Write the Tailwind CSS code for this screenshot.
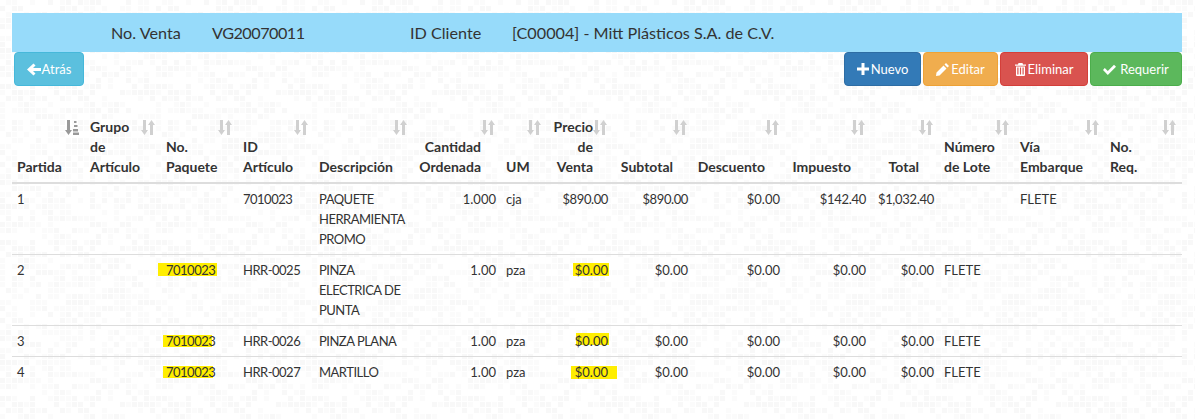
<!DOCTYPE html>
<html lang="en">
<head>
  <meta charset="UTF-8">
  <title>Partidas de Venta</title>
  <script src="https://cdn.jsdelivr.net/npm/@tailwindcss/browser@4"></script>
</head>
<body class="relative h-[419px] overflow-hidden bg-white text-[13px] leading-5 text-[#333] font-['Lato',sans-serif]">
  <!-- textured page background + shared sort icons -->
  <svg class="absolute inset-0 -z-10" width="1195" height="419">
    <defs>
      <pattern id="tile" width="156" height="156" patternUnits="userSpaceOnUse"><g id="tileCells"></g></pattern>
      <symbol id="sort" viewBox="0 0 14 15"><path d="M2 0h3v10h2L3.500 15 0 10h2zM9 15h3V5h2L10.500 0 7 5h2z"/></symbol>
      <symbol id="sortActive" viewBox="0 0 14 15"><path d="M2 0h3v10h2L3.500 15 0 10h2zM9 1h2.500v2H9zM9 5h3.500v2H9zM8 9h5v2.500H8zM8 12.500h6V15H8z"/></symbol>
    </defs>
    <rect width="1195" height="419" fill="url(#tile)"/>
  </svg>

  <div class="pl-3 pr-[13px] pt-[13px]">
    <!-- venta header -->
    <div class="flex h-[39px] items-center bg-[#97dbfa] pl-[99px] text-[16.200px]">
      <span class="w-[101px]">No. Venta</span>
      <span class="w-[198px] tracking-[-0.5px]">VG20070011</span>
      <span class="w-[102px]">ID Cliente</span>
      <span>[C00004] - Mitt Plásticos S.A. de C.V.</span>
    </div>

    <!-- toolbar -->
    <div class="flex h-[34px] justify-between pl-0.5">
      <button class="flex w-[70px] items-center justify-center gap-px rounded border border-[#46b8da] bg-[#5bc0de] text-white">
        <svg width="14" height="13" viewBox="0 0 14 13" fill="#fff"><path d="M6.500 .5 8.500 2.500 6 5h8v3H6l2.500 2.500-2 2L0 6.500z"/></svg>Atrás
      </button>
      <div class="flex gap-0.5">
        <button class="flex w-[77px] items-center justify-center gap-0.5 rounded border border-[#2e6da4] bg-[#337ab7] text-white">
          <svg width="12" height="12" viewBox="0 0 12 12" fill="#fff"><path d="M4.500 0h3v4.500H12v3H7.500V12h-3V7.500H0v-3h4.500z"/></svg>Nuevo
        </button>
        <button class="flex w-[75px] items-center justify-center gap-0.5 rounded border border-[#eea236] bg-[#f0ad4e] text-white">
          <svg width="13" height="13" viewBox="0 0 13 13" fill="#fff"><path d="M10 0 13 3 11.500 4.500 8.500 1.500zM7.500 2.500 10.500 5.500 3.500 12.500 0 13 .5 9.500z"/></svg>Editar
        </button>
        <button class="flex w-[88px] items-center justify-center gap-0.5 rounded border border-[#d43f3a] bg-[#d9534f] text-white">
          <svg width="11" height="13" viewBox="0 0 11 13" fill="#fff"><path d="M3.500 0h4L8 1.500h3v1.300H0V1.500h3zM1 3.500h9V12a1 1 0 0 1-1 1H2a1 1 0 0 1-1-1zm1.300 1v7h1.200v-7zm2.600 0v7h1.200v-7zm2.600 0v7h1.200v-7z"/></svg>Eliminar
        </button>
        <button class="flex w-[92px] items-center justify-center gap-1 rounded border border-[#4cae4c] bg-[#5cb85c] text-white">
          <svg width="13" height="11" viewBox="0 0 13 11" fill="#fff"><path d="M1.800 4 4.800 7 11 .8 13 2.800 4.800 11 0 6z"/></svg>Requerir
        </button>
      </div>
    </div>

    <!-- partidas -->
    <table class="mt-[26px] w-[1170px] table-fixed border-collapse">
      <colgroup>
        <col class="w-[73px]"><col class="w-[76px]"><col class="w-[77px]"><col class="w-[76px]"><col class="w-[99px]">
        <col class="w-[88px]"><col class="w-[46px]"><col class="w-[66px]"><col class="w-[80px]"><col class="w-[92px]">
        <col class="w-[86px]"><col class="w-[68px]"><col class="w-[76px]"><col class="w-[90px]"><col class="w-[77px]">
      </colgroup>
      <thead class="text-[14px]">
        <tr class="border-b-2 border-[#ddd] align-bottom font-bold">
          <th class="relative py-[5px] pl-[5px] pr-0 text-left">Partida
            <svg class="absolute right-1.5 top-2 fill-[#999]" width="14" height="15"><use href="#sortActive"/></svg>
          </th>
          <th class="relative py-[5px] pl-[5px] pr-5 text-left">Grupo de Artículo
            <svg class="absolute right-1.5 top-2 fill-[#d0d0d0]" width="14" height="15"><use href="#sort"/></svg>
          </th>
          <th class="relative py-[5px] pl-[5px] pr-5 text-left">No. Paquete
            <svg class="absolute right-1.5 top-2 fill-[#d0d0d0]" width="14" height="15"><use href="#sort"/></svg>
          </th>
          <th class="relative py-[5px] pl-[5px] pr-5 text-left">ID Artículo
            <svg class="absolute right-1.5 top-2 fill-[#d0d0d0]" width="14" height="15"><use href="#sort"/></svg>
          </th>
          <th class="relative py-[5px] pl-[5px] pr-0 text-left">Descripción
            <svg class="absolute right-1.5 top-2 fill-[#d0d0d0]" width="14" height="15"><use href="#sort"/></svg>
          </th>
          <th class="relative py-[5px] pl-0 pr-5 text-right">Cantidad Ordenada
            <svg class="absolute right-1.5 top-2 fill-[#d0d0d0]" width="14" height="15"><use href="#sort"/></svg>
          </th>
          <th class="relative py-[5px] pl-[5px] pr-0 text-left">UM
            <svg class="absolute right-1.5 top-2 fill-[#d0d0d0]" width="14" height="15"><use href="#sort"/></svg>
          </th>
          <th class="relative py-[5px] pl-0 pr-5 text-right">Precio de Venta
            <svg class="absolute right-1.5 top-2 fill-[#d0d0d0]" width="14" height="15"><use href="#sort"/></svg>
          </th>
          <th class="relative py-[5px] pl-0 pr-5 text-right">Subtotal
            <svg class="absolute right-1.5 top-2 fill-[#d0d0d0]" width="14" height="15"><use href="#sort"/></svg>
          </th>
          <th class="relative py-[5px] pl-0 pr-5 text-right">Descuento
            <svg class="absolute right-1.5 top-2 fill-[#d0d0d0]" width="14" height="15"><use href="#sort"/></svg>
          </th>
          <th class="relative py-[5px] pl-0 pr-5 text-right">Impuesto
            <svg class="absolute right-1.5 top-2 fill-[#d0d0d0]" width="14" height="15"><use href="#sort"/></svg>
          </th>
          <th class="relative py-[5px] pl-0 pr-5 text-right">Total
            <svg class="absolute right-1.5 top-2 fill-[#d0d0d0]" width="14" height="15"><use href="#sort"/></svg>
          </th>
          <th class="relative py-[5px] pl-[5px] pr-3 text-left">Número de Lote
            <svg class="absolute right-1.5 top-2 fill-[#d0d0d0]" width="14" height="15"><use href="#sort"/></svg>
          </th>
          <th class="relative py-[5px] pl-[5px] pr-3 text-left">Vía Embarque
            <svg class="absolute right-1.5 top-2 fill-[#d0d0d0]" width="14" height="15"><use href="#sort"/></svg>
          </th>
          <th class="relative py-[5px] pl-[5px] pr-10 text-left">No. Req.
            <svg class="absolute right-1.5 top-2 fill-[#d0d0d0]" width="14" height="15"><use href="#sort"/></svg>
          </th>
        </tr>
      </thead>
      <tbody class="align-top [&_td]:p-[5px]">
        <tr class="border-b border-[#ddd]">
          <td>1</td><td></td><td></td><td class="tracking-[-0.5px]">7010023</td><td class="tracking-[-0.5px]">PAQUETE HERRAMIENTA PROMO</td>
          <td class="text-right">1.000</td><td>cja</td><td class="text-right tracking-[-0.4px]">$890.00</td><td class="text-right tracking-[-0.4px]">$890.00</td><td class="text-right">$0.00</td>
          <td class="text-right tracking-[-0.3px]">$142.40</td><td class="text-right tracking-[-0.3px]">$1,032.40</td><td></td><td>FLETE</td><td></td>
        </tr>
        <tr class="border-b border-[#ddd]">
          <td>2</td><td></td>
          <td class="relative tracking-[-0.5px]"><span class="absolute -z-[1] left-[-3px] top-[8px] h-[13px] w-[59px] bg-[#ffee00]"></span>7010023</td>
          <td class="tracking-[-0.5px]">HRR-0025</td><td class="tracking-[-0.5px]">PINZA ELECTRICA DE PUNTA</td>
          <td class="text-right">1.00</td><td>pza</td>
          <td class="relative text-right"><span class="absolute -z-[1] right-[4px] top-[8px] h-[13px] w-[36px] bg-[#ffee00]"></span>$0.00</td>
          <td class="text-right">$0.00</td><td class="text-right">$0.00</td>
          <td class="text-right">$0.00</td><td class="text-right">$0.00</td><td>FLETE</td><td></td><td></td>
        </tr>
        <tr class="border-b border-[#ddd]">
          <td>3</td><td></td>
          <td class="relative tracking-[-0.5px]"><span class="absolute -z-[1] left-[2px] top-[9px] h-[12px] w-[49px] bg-[#ffee00]"></span>7010023</td>
          <td class="tracking-[-0.5px]">HRR-0026</td><td class="tracking-[-0.5px]">PINZA PLANA</td>
          <td class="text-right">1.00</td><td>pza</td>
          <td class="relative text-right"><span class="absolute -z-[1] right-[4px] top-[7px] h-[12px] w-[33px] bg-[#ffee00]"></span>$0.00</td>
          <td class="text-right">$0.00</td><td class="text-right">$0.00</td>
          <td class="text-right">$0.00</td><td class="text-right">$0.00</td><td>FLETE</td><td></td><td></td>
        </tr>
        <tr>
          <td>4</td><td></td>
          <td class="relative tracking-[-0.5px]"><span class="absolute -z-[1] left-[2px] top-[9px] h-[12px] w-[50px] bg-[#ffee00]"></span>7010023</td>
          <td class="tracking-[-0.5px]">HRR-0027</td><td class="tracking-[-0.5px]">MARTILLO</td>
          <td class="text-right">1.00</td><td>pza</td>
          <td class="relative text-right"><span class="absolute -z-[1] right-[-4px] top-[9px] h-[13px] w-[46px] bg-[#ffee00]"></span>$0.00</td>
          <td class="text-right">$0.00</td><td class="text-right">$0.00</td>
          <td class="text-right">$0.00</td><td class="text-right">$0.00</td><td>FLETE</td><td></td><td></td>
        </tr>
      </tbody>
    </table>
  </div>

  <script>
    // fill the background tile with a scatter of faint squares
    const cells = document.getElementById('tileCells');
    let seed = 7;
    for (let y = 0; y < 156; y += 6) {
      for (let x = 0; x < 156; x += 6) {
        seed = (seed * 1103515245 + 12345) % 2147483648;
        const n = seed / 2147483648;
        if (n > 0.55) continue;
        const r = document.createElementNS('http://www.w3.org/2000/svg', 'rect');
        r.setAttribute('x', x);
        r.setAttribute('y', y);
        r.setAttribute('width', 5);
        r.setAttribute('height', 5);
        r.setAttribute('fill', n < 0.2 ? '#f8f8f8' : '#fbfbfb');
        cells.appendChild(r);
      }
    }
  </script>
</body>
</html>
